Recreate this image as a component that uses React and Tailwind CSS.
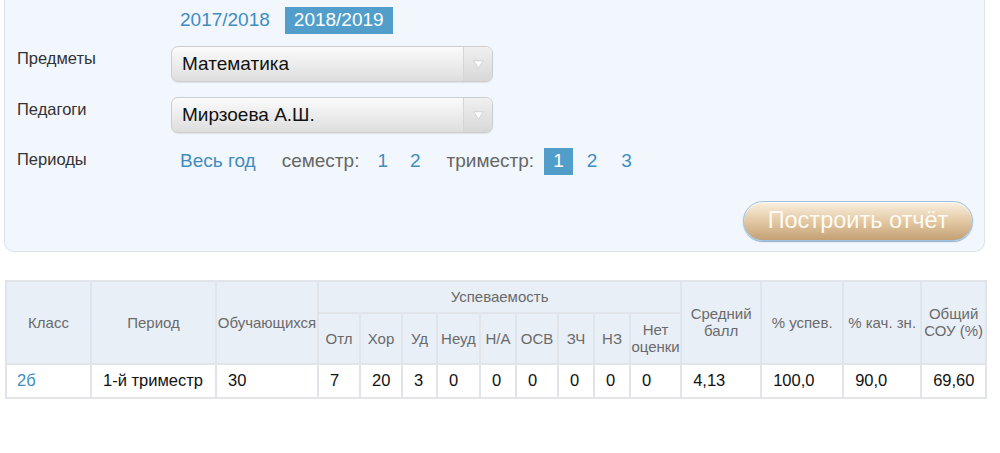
const cols = [85, 125, 102, 42, 42, 35, 43, 36, 42, 36, 36, 51, 80, 82, 78, 65];

const grades = ["Отл", "Хор", "Уд", "Неуд", "Н/А", "ОСВ", "ЗЧ", "НЗ"];
const row = ["1-й триместр", "30", "7", "20", "3", "0", "0", "0", "0", "0", "0", "4,13", "100,0", "90,0", "69,60"];

function Select({ value }) {
  return (
    <div className="flex h-[36px] w-[322px] items-stretch overflow-hidden rounded-[7px] border border-[#cdcdcd] bg-gradient-to-b from-[#fbfbfb] to-[#dedede] shadow-[0_1px_1px_rgba(0,0,0,0.08)]">
      <div className="flex flex-1 items-center pl-[10px] text-[19px] text-[#111]">{value}</div>
      <div className="flex w-[29px] items-center justify-center border-l border-[#d6d6d6] bg-gradient-to-b from-[#f0f0f0] to-[#d8d8d8]">
        <svg width="11" height="9" viewBox="0 0 11 9">
          <path d="M0.7 0.7 L10.3 0.7 L5.5 8.3 Z" fill="#fbfbfb" stroke="#c8c8c8" strokeWidth="0.7" />
        </svg>
      </div>
    </div>
  );
}

function Link({ children, active }) {
  return (
    <span
      className={`flex h-[27px] items-center px-[9px] ${
        active ? "bg-[#529ecb] text-white" : "text-[#3f8dbf]"
      }`}
    >
      {children}
    </span>
  );
}

export default function App() {
  return (
    <div className="h-[453px] w-[1000px] overflow-hidden bg-white font-['Liberation_Sans',Arial,sans-serif]">
      {/* Фильтры */}
      <div className="ml-[4px] w-[981px] rounded-b-[10px] border-x border-b border-[#dbe2ea] bg-[#f2f6fd] pb-[10px] pl-[12px] pr-[11px] pt-[7px]">
        <div className="flex gap-[6px] pl-[154px] text-[19px]">
          <Link>2017/2018</Link>
          <Link active>2018/2019</Link>
        </div>

        <div className="mt-[12px] flex">
          <div className="w-[154px] text-[16.5px] text-[#333]">Предметы</div>
          <Select value="Математика" />
        </div>

        <div className="mt-[15px] flex">
          <div className="w-[154px] text-[16.5px] text-[#333]">Педагоги</div>
          <Select value="Мирзоева А.Ш." />
        </div>

        <div className="mt-[14px] flex items-center">
          <div className="w-[154px] pb-[3px] text-[16.5px] text-[#333]">Периоды</div>
          <div className="flex items-center text-[19px]">
            <Link>Весь год</Link>
            <span className="ml-[17px] mr-[9px] text-[#666]">семестр:</span>
            <Link>1</Link>
            <span className="ml-[4px]" />
            <Link>2</Link>
            <span className="ml-[17px] mr-[10px] text-[#666]">триместр:</span>
            <Link active>1</Link>
            <span className="ml-[5px]" />
            <Link>2</Link>
            <span className="ml-[6px]" />
            <Link>3</Link>
          </div>
        </div>

        <div className="mt-[25px] flex justify-end">
          <button className="h-[40px] w-[230px] rounded-full border border-[#9fc2e0] bg-gradient-to-b from-[#faf0e2] via-[#e3c9a4] to-[#c4a074] text-[23.5px] text-[#fffaf2] shadow-[inset_0_1px_0_rgba(255,255,255,0.7),0_1px_1px_rgba(80,125,170,0.6)]">
            Построить отчёт
          </button>
        </div>
      </div>

      {/* Таблица */}
      <table className="ml-[5px] mt-[28px] w-[980px] table-fixed border-collapse text-[#111]">
        <colgroup>
          {cols.map((w, i) => (
            <col key={i} style={{ width: w }} />
          ))}
        </colgroup>
        <thead className="bg-[#e9eff7] text-[15px] font-normal leading-[17px] text-[#6a6a6a]">
          <tr className="h-[32px]">
            <th rowSpan={2} className="border-2 border-[#e1e5ea] font-normal">Класс</th>
            <th rowSpan={2} className="border-2 border-[#e1e5ea] font-normal">Период</th>
            <th rowSpan={2} className="border-2 border-[#e1e5ea] font-normal">Обучающихся</th>
            <th colSpan={9} className="border-2 border-[#e1e5ea] font-normal">Успеваемость</th>
            <th rowSpan={2} className="border-2 border-[#e1e5ea] font-normal">
              Средний
              <br />
              балл
            </th>
            <th rowSpan={2} className="border-2 border-[#e1e5ea] font-normal">% успев.</th>
            <th rowSpan={2} className="border-2 border-[#e1e5ea] font-normal">% кач. зн.</th>
            <th rowSpan={2} className="border-2 border-[#e1e5ea] font-normal">
              Общий
              <br />
              СОУ (%)
            </th>
          </tr>
          <tr className="h-[51px]">
            {grades.map((g) => (
              <th key={g} className="border-2 border-[#e1e5ea] font-normal">{g}</th>
            ))}
            <th className="border-2 border-[#e1e5ea] font-normal">
              Нет
              <br />
              оценки
            </th>
          </tr>
        </thead>
        <tbody className="text-[16.5px]">
          <tr className="h-[34px]">
            <td className="border-2 border-[#e1e5ea] pl-[10px] text-[#3f8dbf]">2б</td>
            {row.map((v, i) => (
              <td key={i} className="border-2 border-[#e1e5ea] pl-[11px]">
                {v}
              </td>
            ))}
          </tr>
        </tbody>
      </table>
    </div>
  );
}
